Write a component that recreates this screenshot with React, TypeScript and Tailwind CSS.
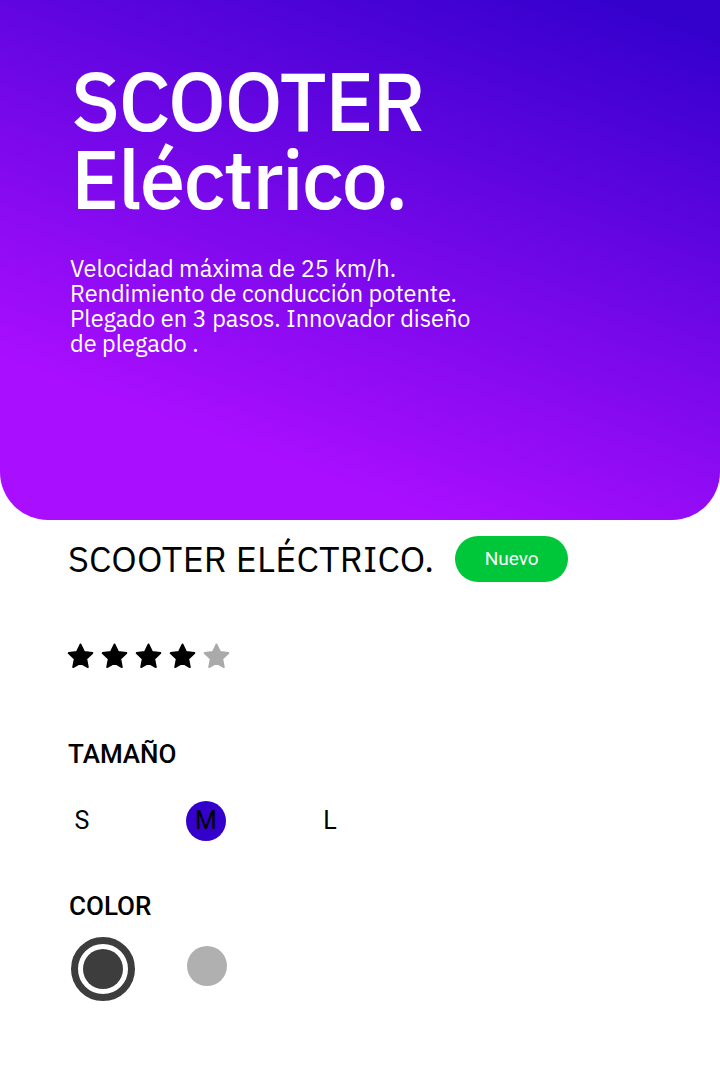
import React, { useState } from 'react';

const Star = ({ filled }: { filled: boolean }) => (
  <svg viewBox="0 0 24 24" className={`w-[31px] h-[31px] ${filled ? 'text-black' : 'text-[#aaaaaa]'}`} fill="currentColor">
    <path d="M12 2.6l2.8 5.9 6.4.8-4.7 4.5 1.2 6.4L12 17l-5.7 3.2 1.2-6.4-4.7-4.5 6.4-.8z" strokeLinejoin="round" stroke="currentColor" strokeWidth="1.4" />
  </svg>
);

export default function App() {
  const [size, setSize] = useState('M');
  const [color, setColor] = useState(0);

  return (
    <div className="w-[720px] h-[1080px] bg-white font-['IBM_Plex_Sans','Noto_Sans',sans-serif]">
      <section className="h-[520px] rounded-b-[48px] bg-[linear-gradient(200deg,#3300cc_4%,#aa0eff_80%)] text-white pl-[70px] pt-[62px]">
        <h1 className="text-[82px] leading-[78px] font-medium tracking-[-1.6px] ml-[1px]">
          SCOOTER<br />Eléctrico.
        </h1>
        <p className="mt-[38px] text-[23.5px] leading-[25px] max-w-[410px]">
          Velocidad máxima de 25 km/h. Rendimiento de conducción potente. Plegado en 3 pasos. Innovador diseño de plegado .
        </p>
      </section>

      <div className="pl-[68px]">
        <div className="flex items-center gap-[21px] mt-[16px]">
          <h2 className="text-[36px] leading-[46px] tracking-[0.2px] text-black">SCOOTER ELÉCTRICO.</h2>
          <span className="h-[46px] w-[113px] rounded-full bg-[#00c73a] text-white flex items-center justify-center text-[19px] font-['Roboto',sans-serif]">Nuevo</span>
        </div>

        <div className="flex gap-[3px] mt-[59px] -ml-[3px]">
          {[0, 1, 2, 3, 4].map(i => <Star key={i} filled={i < 4} />)}
        </div>

        <h3 className="mt-[67px] text-[26px] leading-[30px] font-medium font-['Roboto',sans-serif] text-black">TAMAÑO</h3>
        <div className="flex items-center mt-[32px] font-['Roboto',sans-serif] text-[25px] text-black">
          {['S', 'M', 'L'].map(s => (
            <button
              key={s}
              onClick={() => setSize(s)}
              className={`w-[40px] h-[40px] rounded-full flex items-center justify-center mr-[84px] ${size === s ? 'bg-[#3300cc]' : ''} ${s === 'S' ? '-ml-[6px]' : ''}`}
            >
              {s}
            </button>
          ))}
        </div>

        <h3 className="mt-[50px] text-[26px] leading-[30px] font-medium font-['Roboto',sans-serif] text-black ml-[1px]">COLOR</h3>
        <div className="flex items-center mt-[16px] ml-[3px]">
          <button onClick={() => setColor(0)} className={`w-[64px] h-[64px] rounded-full flex items-center justify-center ${color === 0 ? 'border-[7px] border-[#3d3d3d]' : ''}`}>
            <span className="w-[40px] h-[40px] rounded-full bg-[#3d3d3d]" />
          </button>
          <button onClick={() => setColor(1)} className="ml-[52px] -mt-[6px] w-[40px] h-[40px] rounded-full bg-[#b0b0b0]" />
        </div>
      </div>
    </div>
  );
}
